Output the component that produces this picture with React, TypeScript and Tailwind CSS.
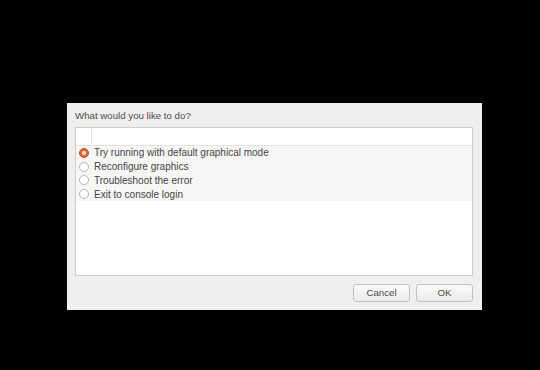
import React from 'react';

const options = [
  'Try running with default graphical mode',
  'Reconfigure graphics',
  'Troubleshoot the error',
  'Exit to console login',
];

const Radio = ({ on }: { on: boolean }) =>
  on ? (
    <span className="w-[10px] h-[10px] rounded-full bg-[#e0693a] border border-[#b8522c] flex items-center justify-center">
      <span className="w-[4px] h-[4px] rounded-full bg-[#fbe3d6]" />
    </span>
  ) : (
    <span className="w-[10px] h-[10px] rounded-full bg-white border border-[#b9b6b1]" />
  );

export default function App() {
  return (
    <div
      className="w-[540px] h-[370px] bg-black pt-[103px] pl-[67px]"
      style={{ fontFamily: '"Liberation Sans", Arial, sans-serif' }}
    >
      <div className="w-[415px] h-[207px] bg-[#f0efed] pl-[8px] pr-[9px] flex flex-col">
        <div className="h-[24px] pt-[7px] text-[9.7px] leading-[12px] text-[#4a4a4a]">
          What would you like to do?
        </div>
        <div className="h-[149px] border border-[#cfcdc9] bg-white flex flex-col">
          <div className="h-[18px] flex border-b border-[#e4e3e0]">
            <div className="w-[16px] border-r border-[#e6e5e2]" />
          </div>
          <div className="bg-[#f6f6f5] flex flex-col">
            {options.map((o, i) => (
              <div key={o} className="h-[13.75px] flex items-center pl-[3px] gap-[5px] text-[10px] text-[#444]">
                <Radio on={i === 0} />
                <span>{o}</span>
              </div>
            ))}
          </div>
        </div>
        <div className="flex justify-end gap-[6px] mt-[8px]">
          <button className="w-[57px] h-[18px] rounded-[3px] border border-[#c3c1bd] bg-gradient-to-b from-[#fbfbfa] to-[#ecebe8] text-[9.7px] text-[#4a4a4a]">
            Cancel
          </button>
          <button className="w-[57px] h-[18px] rounded-[3px] border border-[#c3c1bd] bg-gradient-to-b from-[#fbfbfa] to-[#ecebe8] text-[9.7px] text-[#4a4a4a]">
            OK
          </button>
        </div>
      </div>
    </div>
  );
}
